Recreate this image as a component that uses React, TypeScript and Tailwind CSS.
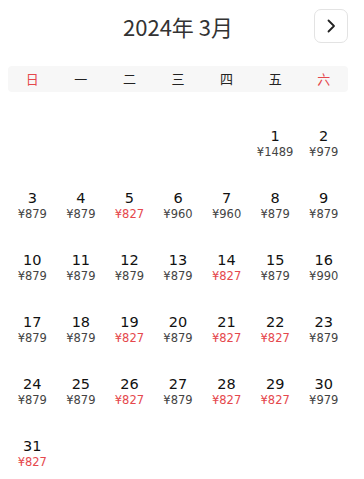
const weekDays = ["日", "一", "二", "三", "四", "五", "六"];

// price per day, true = low price (red)
const prices: Record<number, [number, boolean]> = {
  1: [1489, false], 2: [979, false],
  3: [879, false], 4: [879, false], 5: [827, true], 6: [960, false], 7: [960, false], 8: [879, false], 9: [879, false],
  10: [879, false], 11: [879, false], 12: [879, false], 13: [879, false], 14: [827, true], 15: [879, false], 16: [990, false],
  17: [879, false], 18: [879, false], 19: [827, true], 20: [879, false], 21: [827, true], 22: [827, true], 23: [879, false],
  24: [879, false], 25: [879, false], 26: [827, true], 27: [879, false], 28: [827, true], 29: [827, true], 30: [979, false],
  31: [827, true],
};

const App = () => {
  const firstWeekday = 5; // 2024-03-01 is Friday
  const cells: (number | null)[] = [];
  for (let i = 0; i < firstWeekday; i++) cells.push(null);
  for (let d = 1; d <= 31; d++) cells.push(d);

  return (
    <div className="w-[364px] h-[479px] bg-white overflow-hidden font-['DejaVu_Sans','Noto_Sans_CJK_SC',sans-serif]">
      {/* header */}
      <div className="ml-[8px] w-[340px] flex items-center justify-center relative pt-[9px] h-[43px]">
        <div className="text-[22px] text-[#333] font-['Noto_Sans_CJK_SC',sans-serif] leading-none">
          2024年 3月
        </div>
        <button className="absolute right-0 top-[9px] w-[34px] h-[34px] rounded-[7px] border border-[#e3e3e3] flex items-center justify-center bg-white">
          <svg width="14" height="14" viewBox="0 0 14 14" fill="none">
            <path d="M4.5 1.5 L10 7 L4.5 12.5" stroke="#222" strokeWidth="1.8" strokeLinecap="round" strokeLinejoin="round" />
          </svg>
        </button>
      </div>

      {/* weekdays */}
      <div className="ml-[8px] w-[340px] mt-[23px] h-[26px] bg-[#f7f7f7] rounded-[4px] grid grid-cols-7 items-center">
        {weekDays.map((w, i) => (
          <div
            key={w}
            className={`text-center text-[13px] font-['Noto_Sans_CJK_SC',sans-serif] ${i === 0 || i === 6 ? "text-[#e5484d]" : "text-[#222]"}`}
          >
            {w}
          </div>
        ))}
      </div>

      {/* days */}
      <div className="ml-[8px] w-[340px] mt-[21px] grid grid-cols-7">
        {cells.map((d, i) => {
          if (d === null) return <div key={"e" + i} className="h-[62px]"></div>;
          const [price, low] = prices[d];
          return (
            <div key={d} className="h-[62px] flex flex-col items-center justify-center">
              <div className="text-[14.5px] leading-[17px] text-[#111]">{d}</div>
              <div className={`text-[11.5px] leading-[15px] ${low ? "text-[#e5484d]" : "text-[#444]"}`}>
                ¥{price}
              </div>
            </div>
          );
        })}
      </div>
    </div>
  );
};

export default App;
